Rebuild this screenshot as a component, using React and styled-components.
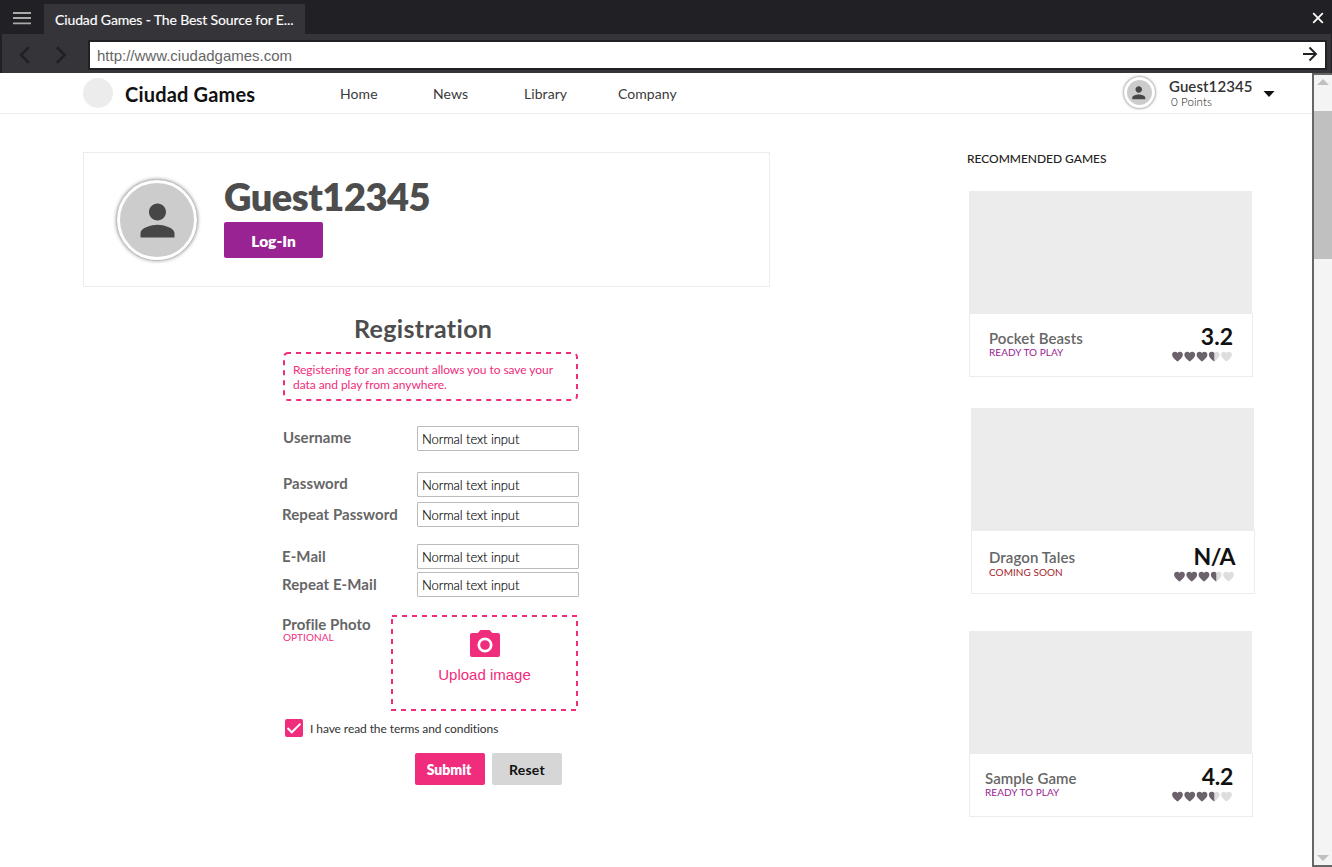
import React from "react";
import styled, { createGlobalStyle, css } from "styled-components";

const Global = createGlobalStyle`
  * { box-sizing: border-box; }
  body { margin: 0; background: #fff; font-family: Lato, sans-serif; overflow: hidden; font-variant-ligatures: none; }
  p, h1, h2, h3 { margin: 0; }
`;

const Browser = styled.div`
  display: flex;
  flex-direction: column;
  width: 1332px;
  height: 867px;
`;
const TitleBar = styled.div`
  display: flex;
  height: 34px;
  flex: none;
  padding: 0 8px 0 13px;
  background: #212025;
  color: #fff;
`;
const MenuIcon = styled.svg`
  width: 18px;
  height: 14px;
  margin-top: 11px;
`;
const Tab = styled.div`
  width: 261px;
  height: 30px;
  margin: 4px 0 0 13px;
  padding-left: 11px;
  background: #353439;
  font-size: 14px;
  line-height: 32px;
  letter-spacing: -0.13px;
  white-space: nowrap;
  -webkit-text-stroke: 0.15px #fff;
`;
const CloseIcon = styled.svg`
  width: 12px;
  height: 12px;
  margin: 12px 0 0 auto;
`;
const Toolbar = styled.div`
  display: flex;
  flex: none;
  height: 39px;
  padding: 6px 4px 3px 16px;
  border: solid #212025;
  border-width: 0 1px 0 2px;
  background: #353439;
`;
const Chevron = styled.svg`
  width: 16px;
  height: 20px;
  margin: 5px 20px 0 0;
`;
const Address = styled.div`
  display: flex;
  flex: none;
  width: 1239px;
  height: 30px;
  margin-left: -1px;
  padding: 0 7px;
  border: 2px solid #212025;
  background: #fff;
  color: #666;
  font: 15px/27px "Liberation Sans", sans-serif;
  justify-content: space-between;
`;
const Arrows = styled.div`
  display: flex;
  flex: none;
  width: 71px;
`;
const GoIcon = styled.svg`
  width: 16px;
  height: 16px;
  margin-top: 4px;
`;
const Viewport = styled.div`
  display: flex;
  flex: 1;
  min-height: 0;
`;
const Page = styled.div`
  width: 1312px;
`;
const Scrollbar = styled.div`
  display: flex;
  flex-direction: column;
  width: 20px;
  height: 794px;
  border: solid #666;
  border-width: 2px 0 2px 2px;
  background: #f4f4f4;
`;
const Arrow = styled.svg`
  width: 12px;
  height: 6px;
  margin: ${(p) => (p.$down ? "auto 0 4px 3px" : "4px 0 26px 3px")};
`;
const Thumb = styled.div`
  height: 148px;
  background: #c0c0c0;
`;
const Header = styled.header`
  display: flex;
  height: 41px;
  padding-left: 83px;
  border-bottom: 1px solid #ececec;
`;
const Logo = styled.div`
  width: 30px;
  height: 30px;
  margin-top: 5px;
  border-radius: 50%;
  background: #ececec;
`;
const Brand = styled.h1`
  width: 215px;
  margin-left: 12px;
  color: #111;
  font-size: 20px;
  font-weight: 700;
  line-height: 42px;
  letter-spacing: 0.18px;
`;
const Nav = styled.nav`
  display: grid;
  grid-template-columns: 93px 91px 94px 504px;
  color: #3a3a3a;
  font-size: 14px;
  line-height: 41px;
  letter-spacing: 0.07px;
`;
const Avatar = styled.div`
  display: flex;
  align-items: center;
  justify-content: center;
  flex: none;
  width: ${(p) => p.$size}px;
  height: ${(p) => p.$size}px;
  border: 3px solid #fff;
  border-radius: 50%;
  background: #ccc;
  box-shadow: 0 0 ${(p) => (p.$size > 40 ? 4 : 3)}px rgba(0, 0, 0, 0.65);
`;
const Account = styled.div`
  display: flex;
  padding: 4px 0 0 1.5px;
`;
const AccountText = styled.div`
  width: 94px;
  margin-left: 14.5px;
`;
const AccountName = styled.div`
  color: #333;
  font-size: 15px;
  font-weight: 600;
  line-height: 19px;
  letter-spacing: 0.08px;
  white-space: nowrap;
`;
const Points = styled.div`
  padding-left: 2px;
  color: #111;
  font-size: 11.5px;
  font-weight: 300;
  line-height: 12px;
  letter-spacing: 0.1px;
`;
const Caret = styled.svg`
  width: 12px;
  height: 6px;
  margin-top: 14px;
`;
const Content = styled.main`
  display: flex;
`;
const Main = styled.section`
  width: 967px;
  padding: 38px 0 0 83px;
`;
const Profile = styled.div`
  display: flex;
  width: 687px;
  height: 135px;
  padding: 27px 33px;
  border: 1px solid #ececec;
`;
const ProfileInfo = styled.div`
  margin: -8px 0 0 27px;
`;
const ProfileName = styled.h2`
  height: 50px;
  color: #4d4d4d;
  font-size: 38px;
  font-weight: 800;
  line-height: 49px;
  letter-spacing: -0.5px;
`;
const Button = styled.button`
  display: block;
  padding: 2px 0 0;
  border: 0;
  border-radius: 2px;
  font-family: inherit;
  font-weight: 700;
  ${(p) =>
    p.$kind === "login"
      ? css`width: 99px; height: 36px; background: #992393; color: #fff; font-size: 15.5px; font-weight: 800;`
      : css`width: 70px; height: 32px; font-size: 14px; padding-top: 1px;
          background: ${p.$kind === "submit" ? "#f02c7d" : "#d6d6d6"};
          color: ${p.$kind === "submit" ? "#fff" : "#111"};`}
  ${(p) => p.$kind === "submit" && "font-weight: 800; padding-right: 2px;"}
  ${(p) => p.$kind === "reset" && "letter-spacing: 0.2px;"}
`;
const Form = styled.div`
  width: 297px;
  margin: 24px 0 0 199px;
`;
const FormTitle = styled.h2`
  padding-left: 72px;
  color: #4d4d4d;
  font-size: 25px;
  font-weight: 700;
  line-height: 34px;
  letter-spacing: 0.34px;
`;
const Dashes = styled.svg`
  position: absolute;
  top: 0;
  left: 0;
  width: 100%;
  height: 100%;
  fill: none;
  stroke: #f02c7d;
  stroke-width: 2;
  stroke-dasharray: 5 5;
`;
const Notice = styled.p`
  position: relative;
  width: 295px;
  height: 49px;
  margin: 7px 0 25px 1px;
  padding: 10px;
  color: #f02c7d;
  font-size: 12px;
  line-height: 15px;
  letter-spacing: -0.05px;
  white-space: nowrap;
`;
const Field = styled.label`
  display: flex;
  justify-content: space-between;
  height: 25px;
  margin-bottom: ${(p) => p.$gap}px;
  padding-left: ${(p) => p.$indent || 0}px;
`;
const Label = styled.span`
  color: #666;
  font-size: 15px;
  font-weight: 700;
  line-height: ${(p) => p.$line || 24}px;
  letter-spacing: 0.07px;
  white-space: nowrap;
`;
const Input = styled.span`
  width: 162px;
  height: 25px;
  padding-left: 4px;
  border: 1px solid #bbb;
  border-radius: 1px;
  color: #000;
  font-size: 13px;
  font-weight: 300;
  line-height: 25px;
  letter-spacing: -0.08px;
  -webkit-text-stroke: 0.15px #000;
`;
const PhotoRow = styled.div`
  display: flex;
  height: 96px;
`;
const PhotoLabel = styled.div`
  display: flex;
  flex-direction: column;
  width: 109px;
`;
const Caption = styled.div`
  padding-left: ${(p) => p.$indent || 0}px;
  color: ${(p) => p.$color};
  font-size: 10px;
  line-height: ${(p) => p.$line}px;
  letter-spacing: 0.05px;
  white-space: nowrap;
`;
const Upload = styled.div`
  position: relative;
  display: flex;
  flex-direction: column;
  align-items: center;
  width: 187px;
  height: 96px;
  padding-top: 15px;
  color: #f02c7d;
  font: 15px/18px "Liberation Sans", sans-serif;
`;
const Camera = styled.svg`
  width: 30px;
  height: 27px;
  margin-bottom: 9px;
`;
const Terms = styled.label`
  display: flex;
  margin: 8px 0 15px 3px;
  color: #333;
  font-size: 12px;
  line-height: 19px;
  letter-spacing: -0.08px;
`;
const Check = styled.svg`
  width: 18px;
  height: 18px;
  margin-right: 7px;
  border-radius: 2px;
  background: #f02c7d;
`;
const Actions = styled.div`
  display: flex;
  gap: 7px;
  padding-left: 133px;
`;
const Aside = styled.aside`
  width: 290px;
  padding-top: 37px;
`;
const AsideTitle = styled.h3`
  margin-bottom: 24px;
  color: #222;
  font-size: 12px;
  font-weight: 500;
  line-height: 16px;
  letter-spacing: -0.03px;
`;
const Card = styled.article`
  width: 284px;
  height: 186px;
  margin: 0 0 ${(p) => p.$gap}px ${(p) => p.$indent}px;
`;
const Cover = styled.div`
  width: 283px;
  height: 122px;
  background: #ececec;
`;
const CardBody = styled.div`
  display: flex;
  justify-content: space-between;
  height: 64px;
  padding: ${(p) => p.$top}px 19px 0 ${(p) => p.$start}px;
  border: 1px solid #ececec;
`;
const GameName = styled.h3`
  color: #666;
  font-size: 15px;
  font-weight: 600;
  line-height: 20px;
  letter-spacing: 0.08px;
`;
const Rating = styled.div`
  display: flex;
  flex-direction: column;
  align-items: flex-end;
  margin-top: ${(p) => p.$shift}px;
`;
const Score = styled.div`
  color: #111;
  font-size: 23px;
  font-weight: 700;
  line-height: 29px;
  letter-spacing: ${(p) => p.$spacing}px;
`;
const Hearts = styled.svg`
  width: 61px;
  height: 11px;
`;

const Person = ({ size }) => (
  <svg width={size} height={size} viewBox="0 0 24 24" fill="#464646">
    <path d="M12 12c2.21 0 4-1.79 4-4s-1.79-4-4-4-4 1.79-4 4 1.79 4 4 4zm0 2c-2.67 0-8 1.34-8 4v2h16v-2c0-2.66-5.33-4-8-4z" />
  </svg>
);

const heart = "M5.5 10 4.7 9.3C1.9 6.8.1 5.2.1 3.1.1 1.5 1.4.2 3 .2c1 0 1.9.4 2.5 1.2C6.1.6 7 .2 8 .2c1.6 0 2.9 1.3 2.9 2.9 0 2.1-1.8 3.7-4.6 6.2Z";
const halfHeart = "M5.5 10 4.7 9.3C1.9 6.8.1 5.2.1 3.1.1 1.5 1.4.2 3 .2c1 0 1.9.4 2.5 1.2Z";
const HeartRow = () => (
  <Hearts viewBox="0 0 61 11">
    {[0, 1, 2, 3, 4].map((i) => (
      <path key={i} d={heart} transform={`translate(${i * 12.25} .6)`} fill={i < 3 ? "#6b626b" : "#dedede"} />
    ))}
    <path d={halfHeart} transform="translate(36.75 .6)" fill="#6b626b" />
  </Hearts>
);

const games = [
  { name: "Pocket Beasts", status: "READY TO PLAY", color: "#992393", score: "3.2", indent: 2, gap: 31, start: 19, top: 14, shift: -6, line: 9, spacing: 0 },
  { name: "Dragon Tales", status: "COMING SOON", color: "#a31e2b", score: "N/A", indent: 4, gap: 37, start: 17, top: 16, shift: -5, line: 11, spacing: -0.5 },
  { name: "Sample Game", status: "READY TO PLAY", color: "#992393", score: "4.2", indent: 2, gap: 0, start: 15, top: 14, shift: -6, line: 9, spacing: -0.3 },
];

const fields = [
  { label: "Username", gap: 21, indent: 1, line: 23 },
  { label: "Password", gap: 5, indent: 1, line: 23 },
  { label: "Repeat Password", gap: 17 },
  { label: "E-Mail", gap: 3 },
  { label: "Repeat E-Mail", gap: 18 },
];

export default function App() {
  return (
    <Browser>
      <Global />
      <TitleBar>
        <MenuIcon viewBox="0 0 18 14" stroke="#aaa" strokeWidth="1.8">
          <path d="M0 2h18M0 7h18M0 12.3h18" />
        </MenuIcon>
        <Tab>Ciudad Games - The Best Source for E...</Tab>
        <CloseIcon viewBox="0 0 12 12" stroke="#fff" strokeWidth="1.8">
          <path d="m1.2 1.2 9.6 9.6m0-9.6-9.6 9.6" />
        </CloseIcon>
      </TitleBar>
      <Toolbar>
        <Arrows>
          <Chevron viewBox="0 0 16 20" fill="none" stroke="#212025" strokeWidth="2.6">
            <path d="M11 2 3 10l8 8" />
          </Chevron>
          <Chevron viewBox="0 0 16 20" fill="none" stroke="#212025" strokeWidth="2.6">
            <path d="m3 2 8 8-8 8" />
          </Chevron>
        </Arrows>
        <Address>
          <span>http://www.ciudadgames.com</span>
          <GoIcon viewBox="0 0 16 16" fill="none" stroke="#212025" strokeWidth="1.9">
            <path d="M1 8h13M7.5 1.5 14 8l-6.5 6.5" />
          </GoIcon>
        </Address>
      </Toolbar>
      <Viewport>
        <Page>
          <Header>
            <Logo />
            <Brand>Ciudad Games</Brand>
            <Nav>
              <span>Home</span>
              <span>News</span>
              <span>Library</span>
              <span>Company</span>
            </Nav>
            <Account>
              <Avatar $size={31}><Person size={19.5} /></Avatar>
              <AccountText>
                <AccountName>Guest12345</AccountName>
                <Points>0 Points</Points>
              </AccountText>
              <Caret viewBox="0 0 12 6"><path d="M.5 0h11L6 6z" fill="#111" /></Caret>
            </Account>
          </Header>
          <Content>
            <Main>
              <Profile>
                <Avatar $size={80}><Person size={51} /></Avatar>
                <ProfileInfo>
                  <ProfileName>Guest12345</ProfileName>
                  <Button $kind="login">Log-In</Button>
                </ProfileInfo>
              </Profile>
              <Form>
                <FormTitle>Registration</FormTitle>
                <Notice>
                  <Dashes><rect x="1" y="1" width="293" height="47" rx="4" strokeDashoffset="2" /></Dashes>
                  Registering for an account allows you to save your<br />
                  data and play from anywhere.
                </Notice>
                {fields.map((f) => (
                  <Field key={f.label} $gap={f.gap} $indent={f.indent}>
                    <Label $line={f.line}>{f.label}</Label>
                    <Input>Normal text input</Input>
                  </Field>
                ))}
                <PhotoRow>
                  <PhotoLabel>
                    <Label $line={18}>Profile Photo</Label>
                    <Caption $color="#f02c7d" $line={9} $indent={1}>OPTIONAL</Caption>
                  </PhotoLabel>
                  <Upload>
                    <Dashes><rect x="1" y="1" width="185" height="94" /></Dashes>
                    <Camera viewBox="0 0 30 27">
                      <path fill="#f02c7d" d="M10.5 0h9l2.7 3H28a2 2 0 0 1 2 2v20a2 2 0 0 1-2 2H2a2 2 0 0 1-2-2V5a2 2 0 0 1 2-2h5.8Z" />
                      <circle cx="15" cy="15" r="6.2" fill="none" stroke="#fff" strokeWidth="2.7" />
                    </Camera>
                    Upload image
                  </Upload>
                </PhotoRow>
                <Terms>
                  <Check viewBox="0 0 18 18" fill="none" stroke="#fff" strokeWidth="2">
                    <path d="m2.5 9 4.3 4.3 8.7-8.7" />
                  </Check>
                  I have read the terms and conditions
                </Terms>
                <Actions>
                  <Button $kind="submit">Submit</Button>
                  <Button $kind="reset">Reset</Button>
                </Actions>
              </Form>
            </Main>
            <Aside>
              <AsideTitle>RECOMMENDED GAMES</AsideTitle>
              {games.map((g) => (
                <Card key={g.name} $gap={g.gap} $indent={g.indent}>
                  <Cover />
                  <CardBody $start={g.start} $top={g.top}>
                    <div>
                      <GameName>{g.name}</GameName>
                      <Caption $color={g.color} $line={g.line}>{g.status}</Caption>
                    </div>
                    <Rating $shift={g.shift}>
                      <Score $spacing={g.spacing}>{g.score}</Score>
                      <HeartRow />
                    </Rating>
                  </CardBody>
                </Card>
              ))}
            </Aside>
          </Content>
        </Page>
        <Scrollbar>
          <Arrow viewBox="0 0 12 6"><path d="M6 0 12 6H0z" fill="#c0c0c0" /></Arrow>
          <Thumb />
          <Arrow $down viewBox="0 0 12 6"><path d="M0 0h12L6 6z" fill="#c0c0c0" /></Arrow>
        </Scrollbar>
      </Viewport>
    </Browser>
  );
}
